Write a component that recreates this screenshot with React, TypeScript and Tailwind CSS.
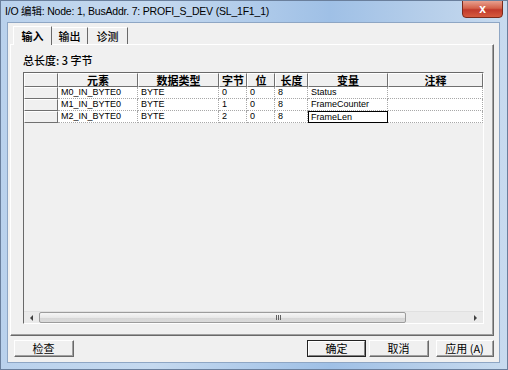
import React from "react";

const cols = [
  { w: 80, label: "元素" },
  { w: 81, label: "数据类型" },
  { w: 28, label: "字节" },
  { w: 28, label: "位" },
  { w: 33, label: "长度" },
  { w: 80, label: "变量" },
  { w: 95, label: "注释" },
];

const rows = [
  ["M0_IN_BYTE0", "BYTE", "0", "0", "8", "Status", ""],
  ["M1_IN_BYTE0", "BYTE", "1", "0", "8", "FrameCounter", ""],
  ["M2_IN_BYTE0", "BYTE", "2", "0", "8", "FrameLen", ""],
];

const raised =
  "border border-t-white border-l-white border-r-[#707070] border-b-[#707070]";

function Btn({ label, def, w }: { label: string; def?: boolean; w: number }) {
  return (
    <div
      className={`h-[17px] flex items-center justify-center bg-[#f0f0f0] text-[11px] text-black ${
        def ? "border border-[#222]" : "border border-t-white border-l-white border-r-[#696969] border-b-[#696969]"
      }`}
      style={{ width: w }}
    >
      <div
        className={`w-full h-full flex items-center justify-center ${
          def ? "border border-t-white border-l-white border-r-[#808080] border-b-[#808080]" : "border-r border-b border-r-[#a0a0a0] border-b-[#a0a0a0]"
        }`}
      >
        {label}
      </div>
    </div>
  );
}

export default function App() {
  return (
    <div
      className="w-[508px] h-[370px] relative overflow-hidden flex flex-col bg-[linear-gradient(90deg,#b9d1ec_0%,#c5d9ef_30%,#9fc0e6_65%,#b7cfea_85%,#c8dbef_100%)] border border-[#6a7f9c]"
      style={{ fontFamily: '"Liberation Sans", "Noto Sans CJK SC", sans-serif' }}
    >
      {/* title bar */}
      <div className="h-[21px] flex items-center pl-[4px] text-[10.5px] tracking-[-0.2px] text-black whitespace-nowrap">
        I/O 编辑: Node: 1, BusAddr. 7: PROFI_S_DEV (SL_1F1_1)
      </div>
      <div className="absolute top-[-1px] right-[4px] w-[41px] h-[18px] rounded-b-[4px] border border-[#7a2a1c] bg-[linear-gradient(180deg,#e8a08f_0%,#d4624a_45%,#c0392b_55%,#d65a3e_100%)] flex items-center justify-center text-white text-[12px] font-bold leading-none">
        x
      </div>

      {/* client */}
      <div className="ml-[6px] mr-[7px] h-[341px] bg-[#f0f0f0] border border-[#8ea6c4] flex flex-col">
        {/* tabs */}
        <div className="flex items-end h-[21px] pl-[5px] pt-[2px]" style={{ fontFamily: '"Noto Sans CJK SC", sans-serif' }}>
          <div className="h-[19px] w-[39px] flex items-center justify-center text-[11px] font-bold bg-[#f0f0f0] border-l border-t border-r border-l-white border-t-white border-r-[#696969] relative z-10 mb-[-1px]">
            输入
          </div>
          <div className="h-[17px] w-[36px] flex items-center justify-center text-[11px] font-medium border-t border-r border-t-white border-r-[#696969]">
            输出
          </div>
          <div className="h-[17px] w-[40px] flex items-center justify-center text-[11px] font-medium border-t border-r border-t-white border-r-[#696969]">
            诊测
          </div>
        </div>
        {/* panel */}
        <div className="ml-[2px] mr-[5px] h-[292px] border border-t-white border-l-white border-r-[#696969] border-b-[#696969] shadow-[inset_-1px_-1px_0_#a0a0a0] flex flex-col">
          <div className="h-[27px] flex items-center pl-[12px] pt-[4px] text-[11px] font-medium text-black" style={{ fontFamily: '"Noto Sans CJK SC", sans-serif' }}>
            总长度:&nbsp;3&nbsp;字节
          </div>
          {/* grid */}
          <div className="ml-[12px] w-[461px] h-[252px] border border-t-[#696969] border-l-[#696969] border-r-white border-b-white flex flex-col bg-[#f0f0f0]">
            <div className="flex-1 flex flex-col">
              {/* header */}
              <div className="flex h-[14px]">
                <div className={`w-[34px] h-full bg-[#f0f0f0] ${raised}`} />
                {cols.map((c) => (
                  <div
                    key={c.label}
                    className={`h-full flex items-center justify-center bg-[#f0f0f0] text-[11px] font-bold text-black ${raised}`}
                    style={{ width: c.w, fontFamily: '"Noto Sans CJK SC", sans-serif' }}
                  >
                    {c.label}
                  </div>
                ))}
              </div>
              {rows.map((r, ri) => (
                <div key={ri} className="flex h-[12px]">
                  <div className={`w-[34px] h-full bg-[#f0f0f0] ${raised}`} />
                  {r.map((v, ci) => {
                    const focus = ri === 2 && ci === 5;
                    return (
                      <div
                        key={ci}
                        className={`h-full bg-white flex items-center text-[9px] leading-none text-black ${
                          focus ? "border border-black pl-[2px]" : "border-r border-b border-dotted border-[#a8a8a8] pl-[3px]"
                        }`}
                        style={{ width: cols[ci].w }}
                      >
                        {v}
                      </div>
                    );
                  })}
                </div>
              ))}
            </div>
            {/* horizontal scrollbar */}
            <div className="h-[12px] flex items-center bg-[#eaeaea] border-t border-[#e0e0e0]">
              <div className="w-[15px] h-full flex items-center justify-center">
                <div className="w-0 h-0 border-y-[3px] border-y-transparent border-r-[3px] border-r-[#404040]" />
              </div>
              <div className="w-[367px] h-[11px] rounded-[2px] border border-[#9c9c9c] bg-[linear-gradient(180deg,#f6f6f6_0%,#e8e8e8_50%,#d6d6d6_51%,#dadada_100%)] flex items-center justify-end pr-[124px]">
                <div className="flex gap-[1px]">
                  <div className="w-[1px] h-[5px] bg-[#606060]" />
                  <div className="w-[1px] h-[5px] bg-[#606060]" />
                  <div className="w-[1px] h-[5px] bg-[#606060]" />
                </div>
              </div>
              <div className="flex-1" />
              <div className="w-[15px] h-full flex items-center justify-center">
                <div className="w-0 h-0 border-y-[3px] border-y-transparent border-l-[3px] border-l-[#404040]" />
              </div>
            </div>
          </div>
        </div>
        {/* buttons */}
        <div className="flex items-center h-[26px] pl-[6px] pr-[5px] pb-[1px]" style={{ fontFamily: '"Noto Sans CJK SC", sans-serif' }}>
          <Btn label="检查" w={60} />
          <div className="flex-1" />
          <Btn label="确定" def w={59} />
          <div className="w-[3px]" />
          <Btn label="取消" w={60} />
          <div className="w-[7px]" />
          <Btn label="应用 (A)" w={58} />
        </div>
      </div>
    </div>
  );
}
